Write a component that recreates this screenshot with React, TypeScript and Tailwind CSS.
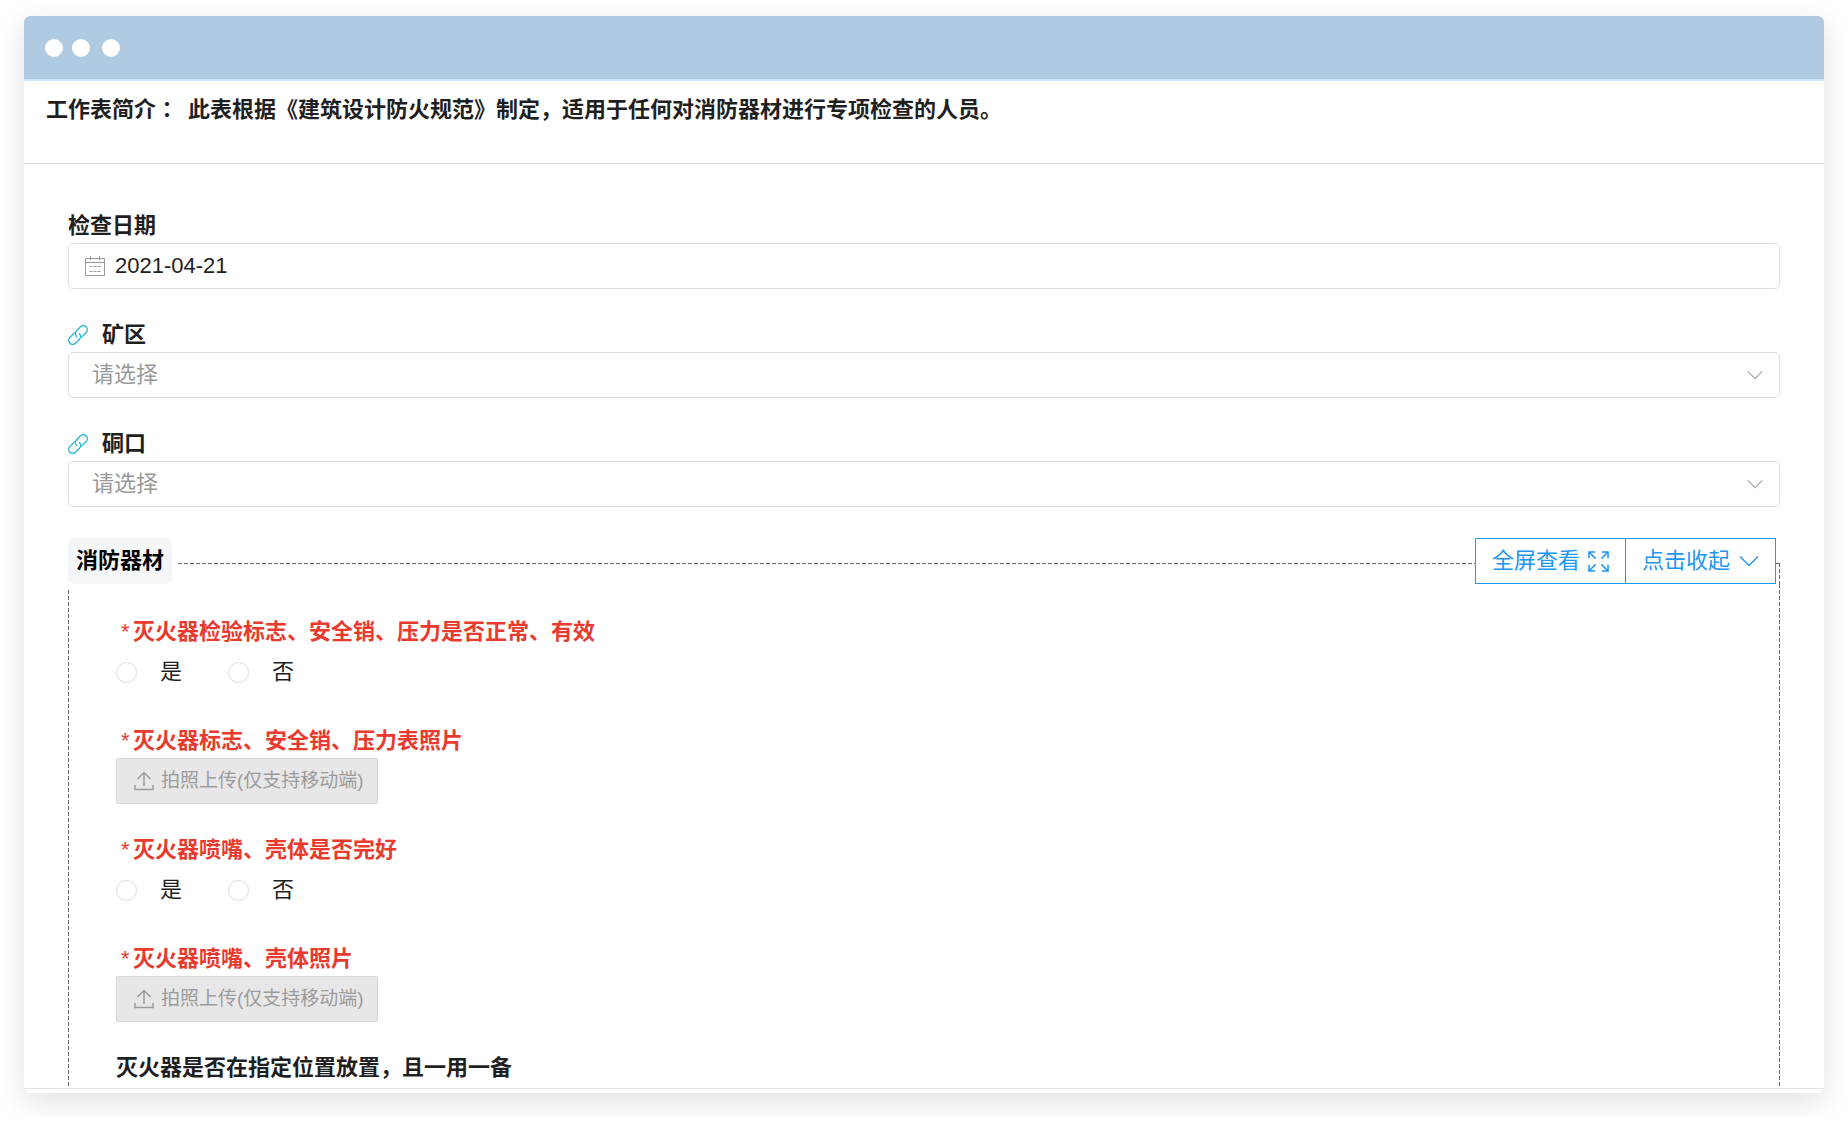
import { useState } from "react"

interface IconProps {
  className?: string
}

function CalendarIcon({ className }: IconProps) {
  return (
    <svg viewBox="0 0 20 20" fill="none" stroke="currentColor" className={className} aria-hidden="true">
      <path d="M.5 2.5h19v17H.5zM.5 6.5h19M5.5 0v4M14.5 0v4" />
      <path d="M4.5 10.5h11M4.5 15.5h11" strokeDasharray="3 1" />
    </svg>
  )
}

function LinkIcon({ className }: IconProps) {
  return (
    <svg viewBox="0 0 20 20" fill="none" stroke="currentColor" strokeWidth="1.4" strokeLinecap="round" className={className} aria-hidden="true">
      <g transform="rotate(-45 10 10)">
        <path d="M9 6H2.5a4 4 0 0 0 0 8H8a4 4 0 0 0 4-4" />
        <path d="M11 14h6.5a4 4 0 0 0 0-8H12a4 4 0 0 0-4 4" />
      </g>
    </svg>
  )
}

function ChevronIcon({ className }: IconProps) {
  return (
    <svg viewBox="0 0 20 12" fill="none" stroke="currentColor" strokeWidth="1.4" className={className} aria-hidden="true">
      <path d="M1 1.5l9 9 9-9" />
    </svg>
  )
}

function ExpandIcon({ className }: IconProps) {
  return (
    <svg viewBox="0 0 22 22" fill="none" stroke="currentColor" strokeWidth="1.6" className={className} aria-hidden="true">
      <path d="M1 7.500V1h6.500M1 1l7 7M14.500 1H21v6.500M21 1l-7 7M1 14.500V21h6.500M1 21l7-7M14.500 21H21v-6.500M21 21l-7-7" />
    </svg>
  )
}

function UploadIcon({ className }: IconProps) {
  return (
    <svg viewBox="0 0 20 20" fill="none" stroke="currentColor" strokeWidth="1.5" className={className} aria-hidden="true">
      <path d="M10 15V1.5M3.5 8L10 1.5 16.5 8M1 14v4.500h18V14" />
    </svg>
  )
}

function SelectField({ id, label }: { id: string; label: string }) {
  return (
    <div>
      <div className="flex h-[34px] items-center gap-[14px]">
        <LinkIcon className="size-5 text-[#27b9d6]" />
        <label htmlFor={id} className="font-bold">
          {label}
        </label>
      </div>
      <div className="relative">
        <select
          id={id}
          defaultValue=""
          className="block h-[46px] w-full appearance-none rounded-[5px] border border-[#dcdfe6] bg-white px-[23px] text-[#999]"
        >
          <option value="">请选择</option>
        </select>
        <ChevronIcon className="pointer-events-none absolute top-[18px] right-[17px] h-[10px] w-4 text-[#a3a6ad]" />
      </div>
    </div>
  )
}

function RequiredTitle({ text }: { text: string }) {
  return (
    <span className="flex h-[34px] items-center font-bold text-[#e83a2e]">
      <span className="w-[17px] pl-1 font-['Liberation_Sans'] font-normal italic">*</span>
      {text}
    </span>
  )
}

function RadioField({ name, title }: { name: string; title: string }) {
  return (
    <fieldset>
      <legend>
        <RequiredTitle text={title} />
      </legend>
      <div className="flex h-[46px] items-center gap-[46px]">
        {["是", "否"].map((option) => (
          <label key={option} className="flex items-center gap-[23px]">
            <input
              type="radio"
              name={name}
              value={option}
              className="size-[21px] appearance-none rounded-full border border-[#dcdcdc] bg-white checked:border-[6px] checked:border-[#2196f3]"
            />
            {option}
          </label>
        ))}
      </div>
    </fieldset>
  )
}

function UploadField({ title }: { title: string }) {
  return (
    <div>
      <RequiredTitle text={title} />
      <button
        type="button"
        disabled
        className="flex h-[46px] items-center gap-[7px] rounded-[2px] border border-[#d6d6d6] bg-[#e7e7e7] pr-[13px] pl-[17px] text-[19px] text-[#9c9c9c]"
      >
        <UploadIcon className="size-5" />
        拍照上传(仅支持移动端)
      </button>
    </div>
  )
}

export default function App() {
  const [date, setDate] = useState("2021-04-21")
  const [open, setOpen] = useState(true)

  return (
    <div className="bg-white px-6 pt-4 pb-6 font-['Liberation_Sans','Noto_Sans_CJK_SC',sans-serif] text-[22px] leading-[30px] text-[#1f1f1f]">
      <main lang="zh-CN" className="overflow-hidden rounded-md bg-white shadow-[0_8px_30px_rgba(0,0,0,0.12)]">
        <header className="flex h-[65px] items-center border-b-2 border-[#cfe6f8] bg-[#b0cae2] pl-[21px]">
          <span className="mr-[9px] size-[18px] rounded-full bg-white" />
          <span className="mr-3 size-[18px] rounded-full bg-white" />
          <span className="size-[18px] rounded-full bg-white" />
        </header>

        <p className="border-b border-[#d9d9d9] px-[22px] pt-[11px] pb-[38px] font-bold">
          工作表简介<span className="mr-[10px] font-['Noto_Sans_CJK_TC']" lang="zh-TW">：</span>
          此表根据《建筑设计防火规范》制定，适用于任何对消防器材进行专项检查的人员。
        </p>

        <form className="border-b border-[#e4e4e4] px-11 pt-[45px]">
          <div className="flex flex-col gap-[29px]">
            <div>
              <label htmlFor="date" className="flex h-[34px] items-center font-bold">
                检查日期
              </label>
              <div className="flex h-[46px] items-center gap-[10px] rounded-[5px] border border-[#dcdfe6] px-4">
                <CalendarIcon className="size-5 text-[#999]" />
                <input
                  id="date"
                  type="text"
                  value={date}
                  onChange={(e) => setDate(e.target.value)}
                  className="flex-1 bg-transparent outline-none"
                />
              </div>
            </div>
            <SelectField id="area" label="矿区" />
            <SelectField id="portal" label="硐口" />
          </div>

          <section className="pt-[31px]">
            <div className="flex h-[46px]">
              <h2 className="flex items-center rounded-[5px] bg-[#f5f6f8] px-2 font-bold text-black">消防器材</h2>
              <span className="mt-[25px] ml-[6px] h-px flex-1 bg-[repeating-linear-gradient(90deg,#666_0_4px,transparent_4px_6px)]" />
              <div className="flex border border-[#2196f3] text-[#2196f3]">
                <button type="button" className="flex items-center gap-2 border-r border-[#2196f3] px-4">
                  全屏查看
                  <ExpandIcon className="size-[21px]" />
                </button>
                <button type="button" onClick={() => setOpen(!open)} className="flex items-center gap-[9px] px-4">
                  点击收起
                  <ChevronIcon className="h-3 w-5" />
                </button>
              </div>
              <span className="mt-[25px] h-px w-[3px] bg-[#666]" />
              <span className="mt-[25px] w-px bg-[repeating-linear-gradient(180deg,#666_0_4px,transparent_4px_6px)]" />
            </div>

            {open && (
              <div className="flex justify-between">
                <span className="mt-[6px] w-px bg-[repeating-linear-gradient(180deg,#666_0_4px,transparent_4px_6px)]" />
                <div className="flex flex-1 flex-col gap-[29px] px-[47px] pt-[31px] pb-[3px]">
                  <RadioField name="valid" title="灭火器检验标志、安全销、压力是否正常、有效" />
                  <UploadField title="灭火器标志、安全销、压力表照片" />
                  <RadioField name="intact" title="灭火器喷嘴、壳体是否完好" />
                  <UploadField title="灭火器喷嘴、壳体照片" />
                  <p className="flex h-[34px] items-center font-bold">灭火器是否在指定位置放置，且一用一备</p>
                </div>
                <span className="w-px bg-[repeating-linear-gradient(180deg,#666_0_4px,transparent_4px_6px)]" />
              </div>
            )}
          </section>
        </form>
        <div className="h-1" />
      </main>
    </div>
  )
}
